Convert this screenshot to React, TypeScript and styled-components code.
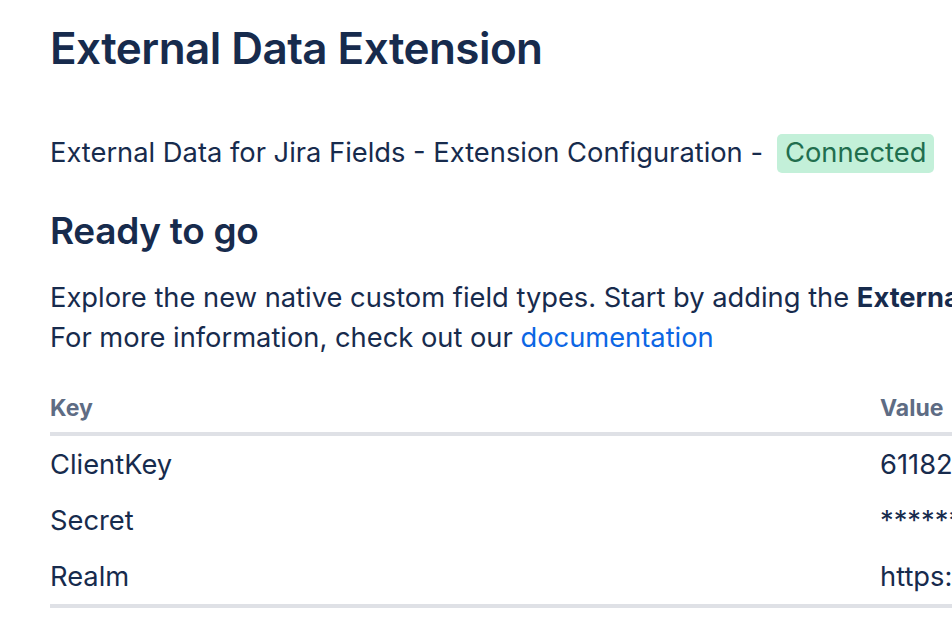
import React from "react";
import styled, { createGlobalStyle } from "styled-components";

const GlobalStyle = createGlobalStyle`
  html, body {
    margin: 0;
    padding: 0;
    background: #ffffff;
    overflow: hidden;
  }
  body {
    font-family: Inter, "Noto Sans", "Liberation Sans", sans-serif;
    color: #172b4d;
  }
`;

const Page = styled.div`
  width: 1600px;
  padding: 20px 50px 0;
  box-sizing: border-box;
`;

const Title = styled.h1`
  margin: 0;
  font-size: 44px;
  line-height: 56px;
  font-weight: 600;
  letter-spacing: -0.55px;
`;

const Subtitle = styled.p`
  margin: 57px 0 0;
  display: flex;
  align-items: center;
  gap: 14px;
  font-size: 27.3px;
  line-height: 40px;
`;

const Lozenge = styled.span`
  display: inline-flex;
  align-items: center;
  height: 39px;
  padding: 0 8px;
  border-radius: 5px;
  background: #c3f0d9;
  color: #216e4e;
  font-size: 27.3px;
`;

const Heading = styled.h2`
  margin: 34px 0 0;
  font-size: 37px;
  line-height: 48px;
  font-weight: 600;
  letter-spacing: -0.3px;
`;

const Paragraph = styled.p`
  margin: 23px 0 0;
  font-size: 27.3px;
  line-height: 40px;
  white-space: nowrap;
`;

const Link = styled.a`
  color: #0c66e4;
  text-decoration: none;
`;

const Table = styled.div`
  margin-top: 26px;
  width: 1400px;
  border-bottom: 4px solid #dfe1e6;
`;

const Row = styled.div<{ $header?: boolean }>`
  display: grid;
  grid-template-columns: 830px 1fr;
  height: ${(p) => (p.$header ? "48px" : "56px")};
  align-items: center;
  font-size: ${(p) => (p.$header ? "23px" : "27.3px")};
  font-weight: ${(p) => (p.$header ? 700 : 400)};
  color: ${(p) => (p.$header ? "#5e6c84" : "#172b4d")};
  border-bottom: ${(p) => (p.$header ? "4px solid #dfe1e6" : "none")};
`;

const rows = [
  { key: "ClientKey", value: "61182c9a-4d1e-4b7f-9c2a-e5f0a1b2c3d4" },
  { key: "Secret", value: "****************************" },
  { key: "Realm", value: "https://external-data.example.com" },
];

const App = () => {
  return (
    <>
      <GlobalStyle />
      <Page>
        <Title>External Data Extension</Title>
        <Subtitle>
          External Data for Jira Fields - Extension Configuration -
          <Lozenge>Connected</Lozenge>
        </Subtitle>
        <Heading>Ready to go</Heading>
        <Paragraph>
          Explore the new native custom field types. Start by adding the{" "}
          <b>External Data</b> field to your project.
          <br />
          For more information, check out our <Link href="#">documentation</Link>
        </Paragraph>
        <Table>
          <Row $header>
            <span>Key</span>
            <span>Value</span>
          </Row>
          {rows.map((r) => (
            <Row key={r.key}>
              <span>{r.key}</span>
              <span>{r.value}</span>
            </Row>
          ))}
        </Table>
      </Page>
    </>
  );
};

export default App;
